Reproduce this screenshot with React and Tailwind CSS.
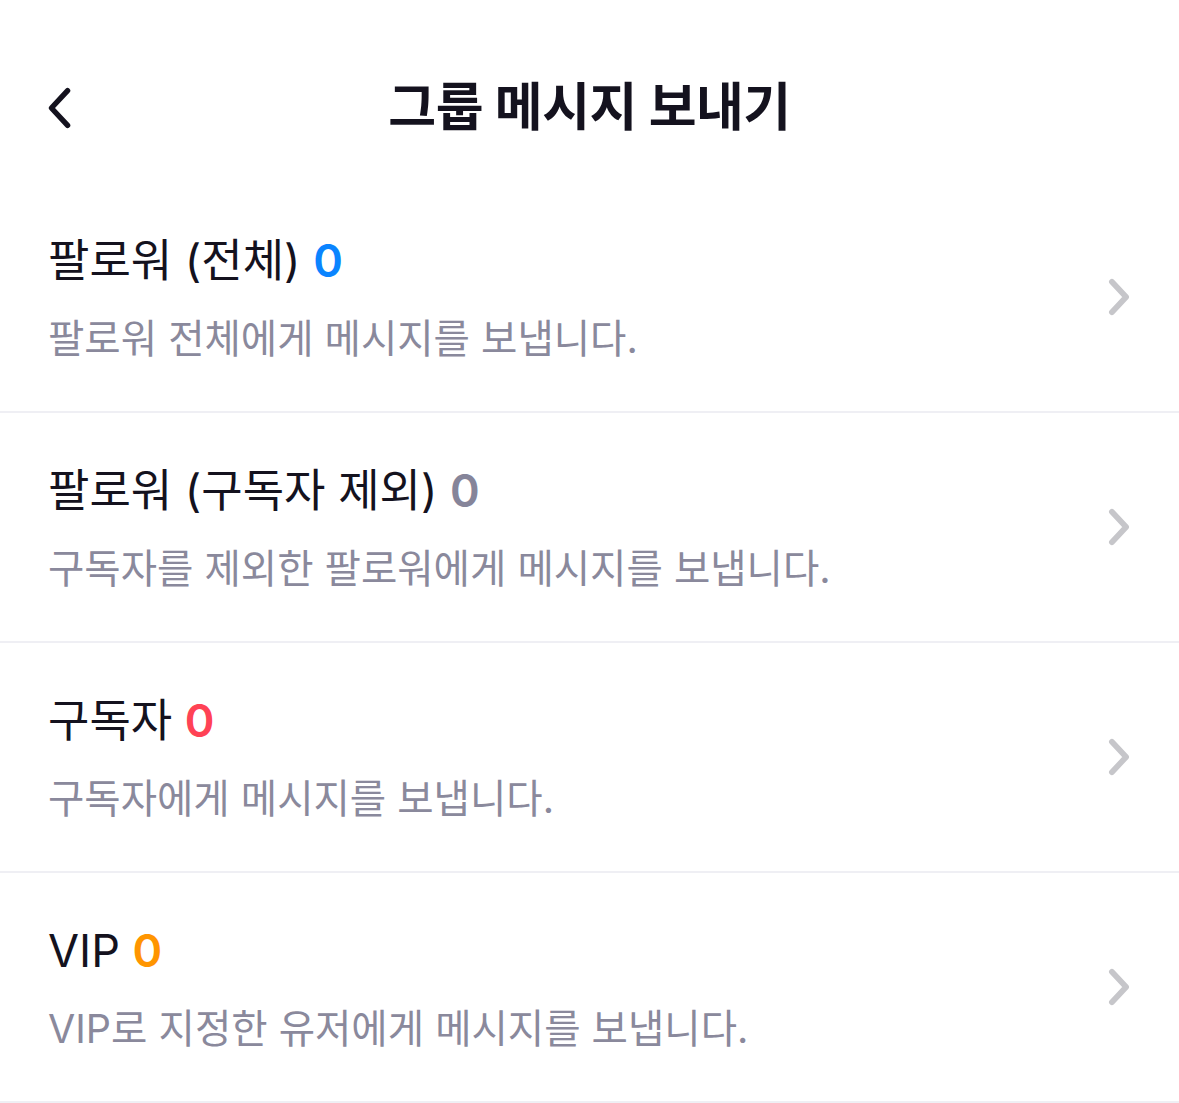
const font = { fontFamily: 'Inter, "Noto Sans CJK KR", "Noto Sans", sans-serif' };

const rows = [
  { label: "팔로워 (전체)", count: 0, color: "text-[#0a84ff]", desc: "팔로워 전체에게 메시지를 보냅니다." },
  { label: "팔로워 (구독자 제외)", count: 0, color: "text-[#86859a]", desc: "구독자를 제외한 팔로워에게 메시지를 보냅니다." },
  { label: "구독자", count: 0, color: "text-[#ff4255]", desc: "구독자에게 메시지를 보냅니다." },
  { label: "VIP", count: 0, color: "text-[#ff9500]", desc: "VIP로 지정한 유저에게 메시지를 보냅니다." },
];

function Chevron({ dir, className, width = 5.5 }) {
  const d = dir === "left" ? "M20 4 L5 20 L20 36" : "M5 4 L20 20 L5 36";
  return (
    <svg viewBox="0 0 25 40" className={className} fill="none" stroke="currentColor" strokeLinecap="round" strokeLinejoin="round">
      <path d={d} strokeWidth={width} />
    </svg>
  );
}

export default function App() {
  return (
    <div className="w-[1179px] h-[1103px] bg-white overflow-hidden" style={font}>
      <header className="relative h-[183px] flex items-center justify-center">
        <button className="absolute left-[46px] top-[86px] text-[#14121e]">
          <Chevron dir="left" className="w-[27px] h-[44px]" width={5} />
        </button>
        <h1 className="text-[52px] font-bold text-[#14121e] tracking-[-0.5px] mt-[32px]">그룹 메시지 보내기</h1>
      </header>
      <ul>
        {rows.map((r) => (
          <li key={r.label} className="h-[230px] border-b-2 border-[#efeff4] flex items-center pl-[48px] pr-[48px]">
            <div className="flex-1 flex flex-col">
              <div className="text-[45px] text-[#14121e] leading-[56px] mt-[2px]">
                {r.label} <span className={`${r.color} font-semibold`}>{r.count}</span>
              </div>
              <div className="text-[39.5px] text-[#8a899c] leading-[50px] mt-[25px]">{r.desc}</div>
            </div>
            <Chevron dir="right" className="w-[24px] h-[38px] text-[#c6c6ca]" width={6} />
          </li>
        ))}
      </ul>
    </div>
  );
}
